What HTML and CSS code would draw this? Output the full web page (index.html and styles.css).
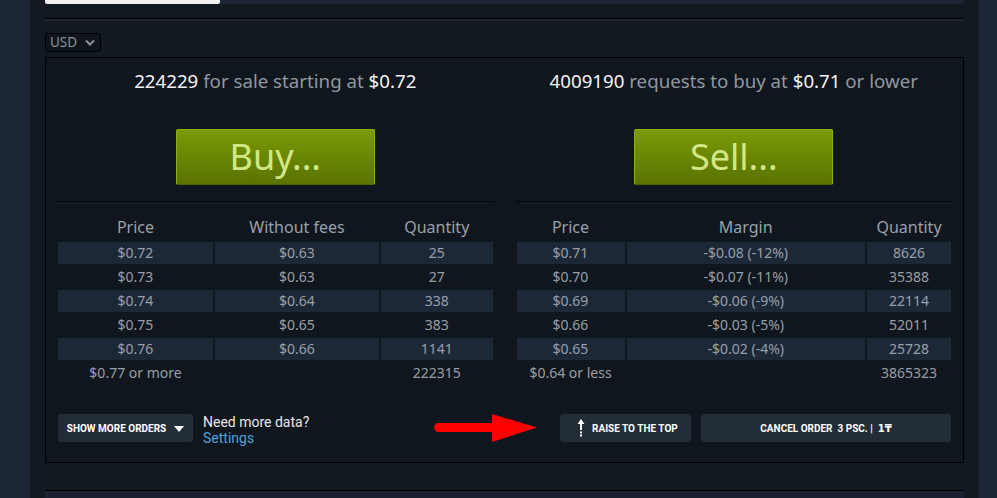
FILE: index.html
```html
<!DOCTYPE html>
<html>
<head>
<meta charset="utf-8">
<link rel="stylesheet" href="styles.css">
</head>
<body>
<div class="page">
  <div class="column">
    <div class="tabs"><div class="tab-active"></div></div>
    <div class="rule"></div>
    <div class="currency">USD <svg class="chev" width="10" height="7" viewBox="0 0 10 7"><path d="M1 1.5 L5 5.5 L9 1.5" fill="none" stroke="#8a939b" stroke-width="2"/></svg></div>
    <div class="market">
      <div class="halves">
        <div class="half">
          <div class="headline"><span class="num">224229</span> for sale starting at <span class="num">$0.72</span></div>
          <button class="btn-green">Buy...</button>
          <div class="sep"></div>
          <table class="orders sell">
            <thead><tr><th>Price</th><th>Without fees</th><th>Quantity</th></tr></thead>
            <tbody>
              <tr class="stripe"><td>$0.72</td><td>$0.63</td><td>25</td></tr>
              <tr><td>$0.73</td><td>$0.63</td><td>27</td></tr>
              <tr class="stripe"><td>$0.74</td><td>$0.64</td><td>338</td></tr>
              <tr><td>$0.75</td><td>$0.65</td><td>383</td></tr>
              <tr class="stripe"><td>$0.76</td><td>$0.66</td><td>1141</td></tr>
              <tr><td>$0.77 or more</td><td></td><td>222315</td></tr>
            </tbody>
          </table>
        </div>
        <div class="half">
          <div class="headline"><span class="num">4009190</span> requests to buy at <span class="num">$0.71</span> or lower</div>
          <button class="btn-green">Sell...</button>
          <div class="sep"></div>
          <table class="orders buy">
            <thead><tr><th>Price</th><th>Margin</th><th>Quantity</th></tr></thead>
            <tbody>
              <tr class="stripe"><td>$0.71</td><td>-$0.08 (-12%)</td><td>8626</td></tr>
              <tr><td>$0.70</td><td>-$0.07 (-11%)</td><td>35388</td></tr>
              <tr class="stripe"><td>$0.69</td><td>-$0.06 (-9%)</td><td>22114</td></tr>
              <tr><td>$0.66</td><td>-$0.03 (-5%)</td><td>52011</td></tr>
              <tr class="stripe"><td>$0.65</td><td>-$0.02 (-4%)</td><td>25728</td></tr>
              <tr><td>$0.64 or less</td><td></td><td>3865323</td></tr>
            </tbody>
          </table>
        </div>
      </div>
      <div class="actions">
        <button class="btn-dark more">SHOW MORE ORDERS <svg width="10" height="6" viewBox="0 0 10 6"><path d="M0 0 H10 L5 6 Z" fill="#fff"/></svg></button>
        <div class="need">
          <div class="need-q">Need more data?</div>
          <a class="settings">Settings</a>
        </div>
        <svg class="pointer" width="103" height="28" viewBox="0 0 103 28"><path d="M4.5 9 H58 V0 L103 13.5 L58 28 V18 H4.5 A4.5 4.5 0 0 1 4.5 9 Z" fill="#ff0000"/></svg>
        <button class="btn-dark raise"><svg width="8" height="18" viewBox="0 0 8 18"><path d="M4 0 L7.5 5 H5 V11 H3 V5 H0.5 Z" fill="#fff"/><rect x="3" y="12.5" width="2" height="2" fill="#fff"/><rect x="3" y="15.5" width="2" height="2" fill="#fff"/></svg> RAISE TO THE TOP</button>
        <button class="btn-dark cancel">CANCEL ORDER&nbsp; 3 PSC. |&nbsp; <span class="tenge">1₸</span></button>
      </div>
    </div>
    <div class="rule bottom"></div>
  </div>
</div>
</body>
</html>
```
FILE: styles.css
```css
html, body {
  margin: 0;
  padding: 0;
  background: #1b2535;
  height: 100%;
  overflow: hidden;
}
.page {
  display: flex;
  height: 498px;
}
.column {
  margin-left: 30px;
  width: 949px;
  background: #121921;
  padding: 0 15px;
  box-sizing: border-box;
  font-family: "Noto Sans", "Open Sans", sans-serif;
}
.tabs {
  height: 4px;
  background: #1c2533;
  border-radius: 0 0 2px 2px;
}
.tab-active {
  width: 175px;
  height: 4px;
  background: #f2f2f2;
  border-radius: 0 0 2px 2px;
}
.rule {
  margin-top: 14px;
  height: 2px;
  border-top: 1px solid #000;
  background: #1d2734;
}
.rule.bottom {
  margin-top: 27px;
  height: 10px;
  background: #1a2230;
}
.currency {
  margin-top: 12px;
  width: 56px;
  height: 19px;
  box-sizing: border-box;
  border: 1px solid #000;
  border-radius: 3px;
  background: #0f151c;
  color: #8a939b;
  font-size: 13.5px;
  line-height: 17px;
  padding-left: 4px;
  display: flex;
  align-items: center;
  gap: 8px;
}
.market {
  margin-top: 5px;
  border: 1px solid #000;
  background: #10161e;
  height: 406px;
  box-sizing: border-box;
}
.halves {
  display: grid;
  grid-template-columns: 1fr 1fr;
}
.half {
  padding: 0 10px;
  display: flex;
  flex-direction: column;
  align-items: center;
}
.headline {
  margin-top: 11px;
  font-size: 18.7px;
  line-height: 24px;
  color: #8f98a0;
  white-space: nowrap;
}
.headline .num {
  color: #f4f4f4;
}
.btn-green {
  margin-top: 36px;
  width: 199px;
  height: 56px;
  border: 1px solid #8cb20a;
  border-bottom-color: #4e6404;
  border-radius: 2px;
  background: linear-gradient(to bottom, #7a9a05 0%, #5a7303 100%);
  color: #d2e885;
  font-family: "Noto Sans", "Open Sans", sans-serif;
  font-size: 36px;
  line-height: 52px;
  padding: 0;
  cursor: pointer;
}
.sep {
  margin-top: 16px;
  width: 100%;
  height: 0;
  border-top: 1px solid #05080b;
}
.orders {
  width: 100%;
  border-collapse: separate;
  border-spacing: 2px;
  color: #989fa7;
  font-size: 14px;
}
.orders th {
  height: 33px;
  padding: 0 0 3px;
  vertical-align: bottom;
  font-weight: normal;
  font-size: 16px;
  line-height: 20px;
  color: #9aa1a8;
}
.orders td {
  height: 22px;
  padding: 0;
  text-align: center;
  line-height: 22px;
}
.orders tr.stripe td {
  background: #1d2837;
}
.sell th:nth-child(1) { width: 155px; }
.sell th:nth-child(2) { width: 164px; }
.buy th:nth-child(1) { width: 108px; }
.buy th:nth-child(3) { width: 84px; }
.actions {
  margin-top: 28px;
  padding: 0 12px;
  display: flex;
  align-items: center;
  height: 28px;
}
.btn-dark {
  height: 28px;
  border: none;
  border-radius: 3px;
  background: #222d37;
  color: #ffffff;
  font-family: Roboto, sans-serif;
  font-weight: bold;
  font-size: 10px;
  padding: 0;
  display: flex;
  align-items: center;
  justify-content: center;
  cursor: pointer;
}
.more {
  width: 135px;
  gap: 8px;
  padding-top: 1px;
}
.need {
  margin-left: 10px;
  padding-top: 4px;
  font-family: Roboto, sans-serif;
  font-size: 14px;
  line-height: 16px;
}
.need-q {
  color: #e8e8e8;
}
.settings {
  color: #4ea2d9;
}
.pointer {
  margin-left: auto;
  margin-right: 23px;
}
.raise {
  width: 131px;
  gap: 7px;
  justify-content: flex-start;
  padding-left: 17px;
}
.cancel {
  margin-left: 10px;
  width: 250px;
  white-space: pre;
}
.tenge {
  font-family: "DejaVu Sans", sans-serif;
  font-weight: bold;
}
```
